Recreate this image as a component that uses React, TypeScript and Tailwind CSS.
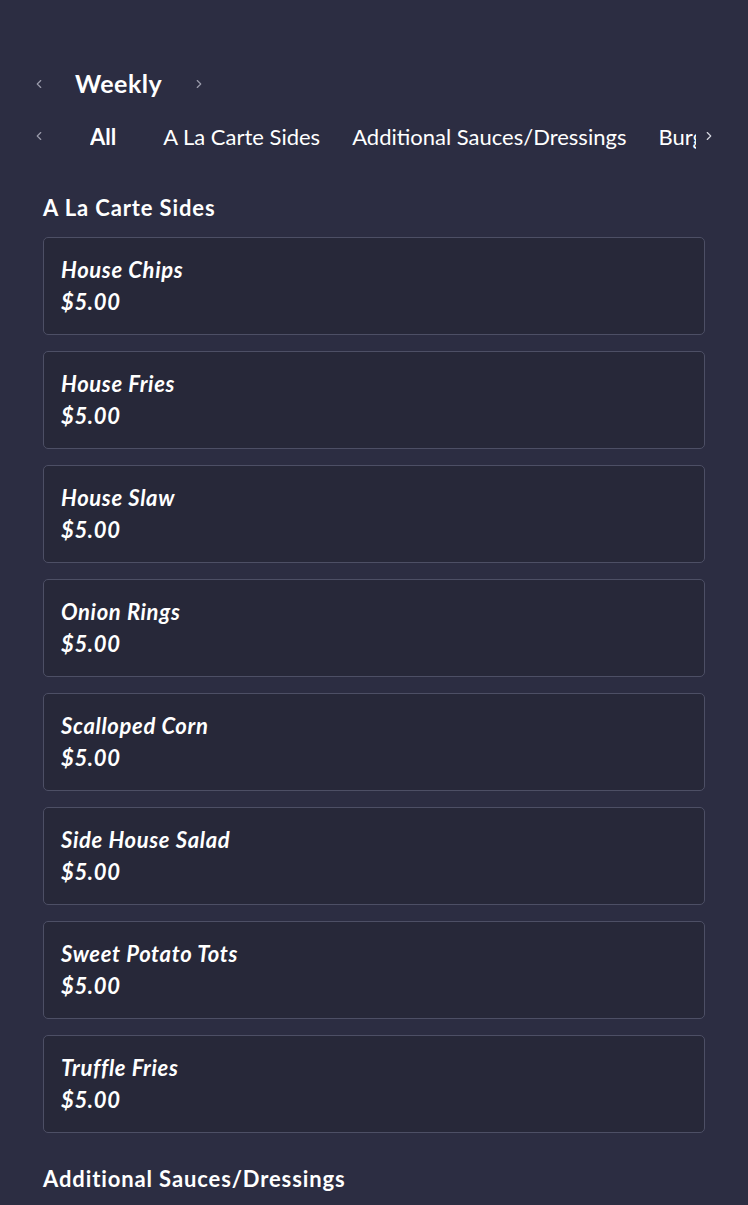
import { ChevronLeft, ChevronRight } from "lucide-react";

const sections = [
  {
    name: "A La Carte Sides",
    items: [
      { name: "House Chips", price: "$5.00" },
      { name: "House Fries", price: "$5.00" },
      { name: "House Slaw", price: "$5.00" },
      { name: "Onion Rings", price: "$5.00" },
      { name: "Scalloped Corn", price: "$5.00" },
      { name: "Side House Salad", price: "$5.00" },
      { name: "Sweet Potato Tots", price: "$5.00" },
      { name: "Truffle Fries", price: "$5.00" },
    ],
  },
  {
    name: "Additional Sauces/Dressings",
    items: [
      { name: "Ranch", price: "$0.50" },
      { name: "Blue Cheese", price: "$0.50" },
    ],
  },
];

const tabs = ["All", "A La Carte Sides", "Additional Sauces/Dressings", "Burgers"];

export default function App() {
  return (
    <div
      className="h-[1205px] overflow-hidden bg-[#2c2d42] text-white"
      style={{ fontFamily: "Lato, 'Open Sans', sans-serif" }}
    >
      <div className="pt-[68px] px-[32px]">
        <div className="flex items-center h-[32px]">
          <ChevronLeft size={14} className="text-[#9a9bab]" />
          <span className="ml-[29px] text-[25px] font-bold tracking-[0.02em]">Weekly</span>
          <ChevronRight size={14} className="ml-[30px] text-[#9a9bab]" />
        </div>

        <div className="flex items-center h-[32px] mt-[20px]">
          <ChevronLeft size={14} className="text-[#9a9bab] shrink-0" />
          <div className="flex-1 overflow-hidden ml-[44px] mr-[6px]">
            <div className="flex gap-[32px] whitespace-nowrap text-[22px]">
              {tabs.map((tab, i) => (
                <span key={tab} className={i === 0 ? "font-bold mr-[15px]" : "font-normal"}>
                  {tab}
                </span>
              ))}
            </div>
          </div>
          <ChevronRight size={14} className="text-[#d5d6df] shrink-0" />
        </div>
      </div>

      <div className="px-[43px] pt-[42px]">
        {sections.map((section) => (
          <div key={section.name} className="mb-[32px]">
            <h2 className="text-[22px] font-bold tracking-[0.04em] leading-[28px] mb-[15px]">
              {section.name}
            </h2>
            <ul className="flex flex-col gap-[16px]">
              {section.items.map((item) => (
                <li
                  key={item.name}
                  className="rounded-[5px] border border-[#4d4f65] bg-[#272839] px-[17px] py-[16px]"
                >
                  <p className="text-[22px] font-bold italic tracking-[0.03em] leading-[32px]">{item.name}</p>
                  <p className="text-[22px] font-bold italic tracking-[0.03em] leading-[32px]">{item.price}</p>
                </li>
              ))}
            </ul>
          </div>
        ))}
      </div>
    </div>
  );
}
